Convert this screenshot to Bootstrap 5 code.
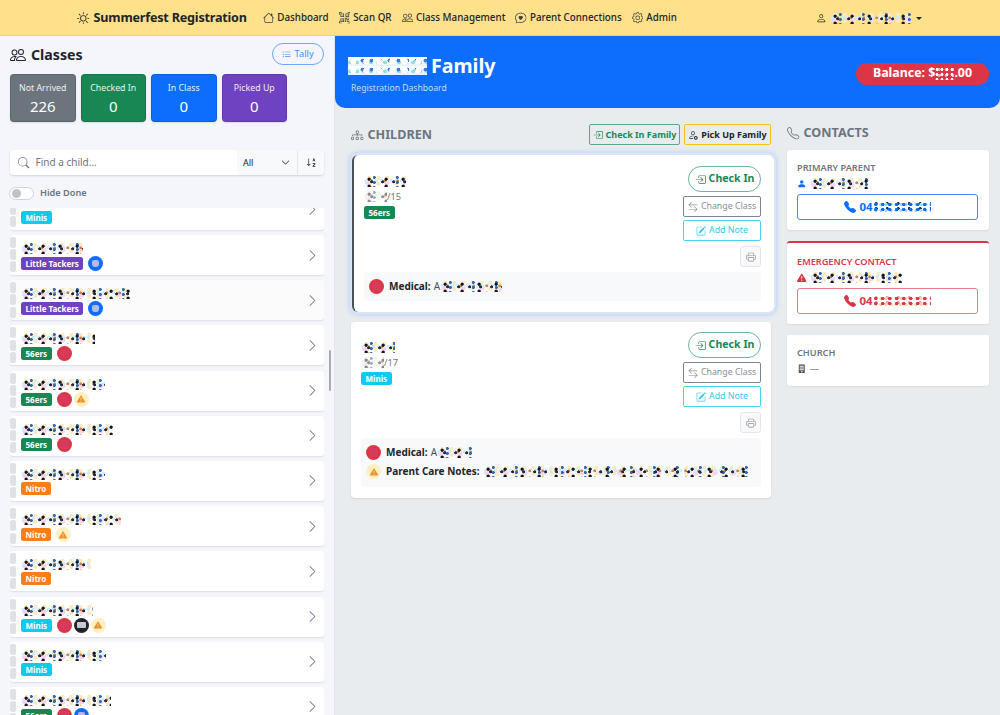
<!DOCTYPE html>
<html lang="en">
<head>
    <meta charset="UTF-8">
    <meta name="viewport" content="width=device-width, initial-scale=1.0">
    <title>Summerfest Registration</title>
    <link rel="stylesheet" href="https://cdn.jsdelivr.net/npm/bootstrap@5.3.0/dist/css/bootstrap.min.css">
    <style>
        body { font-family: "Noto Sans", "Liberation Sans", sans-serif; background: #e9ecef; color: #212529; overflow: hidden; height: 715px; }
        .ico { width: 1em; height: 1em; fill: currentColor; flex: none; vertical-align: -0.125em; }

        .top-bar { height: 36px; background: #ffe08b; border-bottom: 1px solid #f4d06c; padding: 1px 78px 0 77px; }
        .top-brand { font-size: 12.6px; letter-spacing: -.2px; font-weight: 700; color: #212529; margin-right: 16px; gap: 4px; }
        .top-link { font-size: 9.8px; font-weight: 500; color: #212529; margin-right: 10px; gap: 3px; text-decoration: none; }
        .top-link .ico { font-size: 11.5px; color: #3d4248; }
        .top-user { font-size: 10.6px; gap: 3px; }
        .top-user::after { content: ""; border-top: 3px solid #212529; border-left: 3px solid transparent; border-right: 3px solid transparent; margin-left: 1px; }

        .shell { height: 679px; }
        .side-pane { width: 335px; flex: none; background: #f4f6fb; border-right: 1px solid #e4e7ec; padding: 7px 10px 0; position: relative; overflow: hidden; }
        .side-title { font-size: 14.2px; font-weight: 700; gap: 5px; color: #212529; margin-top: 1px; }
        .side-title .ico { font-size: 16px; }
        .tally-btn { width: 52px; height: 22px; padding: 0; font-size: 9.2px; border: 1px solid #6ea8fe; border-radius: 11px; color: #3d8bfd; gap: 3px; background: transparent; }

        .stat-row { gap: 5px; margin-top: 9px; }
        .stat-tile { width: 65.5px; height: 48px; border-radius: 4px; border: 1px solid rgba(0,0,0,.12); color: #fff; text-align: center; padding-top: 6px; box-shadow: 0 1px 2px rgba(0,0,0,.1); }
        .stat-tile .stat-label { font-size: 8.8px; line-height: 14px; opacity: .9; }
        .stat-tile .stat-num { font-size: 15px; line-height: 22px; }
        .tile-purple { background: #6f42c1; }

        .find-bar { margin-top: 28px; height: 25px; background: #fff; border-radius: 4px; box-shadow: 0 1px 2px rgba(0,0,0,.15); overflow: hidden; }
        .find-text { font-size: 10px; color: #6c757d; gap: 6px; padding-left: 8px; width: 227px; }
        .find-text .ico { font-size: 11.5px; color: #6c757d; }
        .find-select { width: 60px; background: #f8f9fa; font-size: 9px; color: #212529; padding: 0 7px 0 6px; }
        .find-sort { flex: 1; background: #f8f9fa; border-left: 1px solid #e4e7ec; color: #212529; font-size: 11px; }
        .hide-row { margin-top: 11px; height: 14px; gap: 6px; margin-left: -1px; }
        .fake-switch { width: 25px; height: 13px; border: 1px solid #ced4da; border-radius: 7px; background: #fff; padding: 1px 2px; }
        .fake-switch::before { content: ""; display: block; width: 9px; height: 9px; border-radius: 50%; background: #bfc3c7; }
        .hide-label { font-size: 9.2px; font-weight: 600; color: #6c757d; }

        .kid-clip { position: absolute; left: 10px; right: 10px; top: 172px; bottom: 0; overflow: hidden; }
        .kid-row { height: 40px; margin-bottom: 5.2px; background: #fff; border-radius: 3px; box-shadow: 0 1px 2px rgba(0,0,0,.1); padding: 2px 5px 0 0; }
        .kid-row:first-child { margin-top: -18.2px; }
        .kid-row.kid-alt { background: #fbfbfc; }
        .kid-grip { width: 6px; gap: 1.2px; margin-right: 5px; flex: none; }
        .kid-grip i { display: block; height: 11px; background: #dee2e6; border-radius: 2px; }
        .kid-body { padding-top: 6px; }
        .kid-chev { color: #6c7a90; font-size: 13px; margin-top: 11.5px; }
        .tag-row { gap: 2px; margin-top: 2px; }

        .class-tag { font-size: 8px; font-weight: 700; color: #fff; height: 13px; line-height: 13px; padding: 0 4.5px; border-radius: 2.5px; display: inline-block; margin-right: 3px; }
        .tag-green { background: #198754; }
        .tag-cyan { background: #0dcaf0; }
        .tag-purple { background: #6f42c1; }
        .tag-orange { background: #fd7e14; }

        .dot-mark { width: 15px; height: 15px; border-radius: 50%; display: inline-flex; align-items: center; justify-content: center; flex: none; }
        .dot-mark::before { content: ""; display: block; }
        .dot-red { background: #dc3545; }
        .dot-red::before { width: 9px; height: 9px; border-radius: 2px; background: #d63a5f; }
        .dot-blue { background: #0d6efd; }
        .dot-blue::before { width: 7px; height: 7px; border-radius: 2px 2px 3px 3px; background: #b9b7e6; }
        .dot-dark { background: #212529; }
        .dot-dark::before { width: 9px; height: 6px; border-radius: 1px; background: #c9c9d2; }
        .dot-warn { background: #fff0c2; color: #e8912a; font-size: 8px; }
        .dot-warn::before { display: none; }

        .fam-head { height: 72px; background: #0d6efd; color: #fff; border-radius: 0 0 10px 10px; padding: 0 11px 0 13px; }
        .fam-block { margin-top: 3px; }
        .fam-name { font-size: 19.6px; font-weight: 700; line-height: 26px; gap: 4px; }
        .fam-sub { font-size: 8.6px; color: #c5dcff; margin-left: 3px; line-height: 14px; margin-top: 2px; }
        .bal-pill { background: #dc3545; font-size: 12.4px; font-weight: 700; height: 22px; width: 133px; border-radius: 11px; margin-top: 3px; }

        .main-pane { flex: 1; min-width: 0; }
        .main-cols { padding: 16px 11px 0 16px; gap: 16px; }
        .kids-col { width: 420px; flex: none; }
        .contacts-col { flex: 1; min-width: 0; }
        .sect-title { font-size: 12.6px; font-weight: 700; color: #6c757d; gap: 4px; }
        .sect-title .ico { font-size: 12.5px; }
        .kids-head .sect-title { margin-top: 2px; }
        .fam-btn { font-size: 9px; font-weight: 700; height: 21px; padding: 0; border-radius: 2px; gap: 3px; background: transparent; white-space: nowrap; }
        .fam-btn .ico { font-size: 10px; }
        .fam-in { border: 1.5px solid #5ba78a; color: #198754; width: 91px; }
        .fam-up { border: 1.5px solid #ffc107; color: #212529; width: 87px; }

        .kid-card { background: #fff; border-radius: 4px; box-shadow: 0 1px 2px rgba(0,0,0,.1); padding: 10px; }
        .kid-card.kid-picked { margin: 10px 0 10px 1px; width: 422px; border-left: 2px solid #495057; padding: 11px 13px 11px 10px; border-radius: 6px; box-shadow: 0 0 0 2px #dbe4f3, 0 0 5px 3px #b9d2f8; }
        .kid-left { padding-top: 10px; }
        .kid-meta { font-size: 9.2px; color: #6c757d; line-height: 13px; margin-top: 3px; margin-bottom: 3px; }
        .act-col { gap: 3px; width: 78px; }
        .act-main { height: 26px; width: 73px; font-size: 10.6px; font-weight: 700; color: #198754; border: 1px solid #6db596; border-radius: 13px; gap: 3px; background: #fff; margin-bottom: 1px; padding: 0; }
        .act-main .ico { font-size: 11px; }
        .act-small { height: 21px; width: 78px; font-size: 8.8px; border-radius: 2px; gap: 3px; background: #fff; padding: 0; }
        .act-small .ico { font-size: 10px; }
        .act-change { border: 1px solid #7d858c; color: #868e96; }
        .act-note { border: 1px solid #44d5f3; color: #31c9ec; }
        .act-print { height: 21px; width: 21px; margin-top: 2px; background: #f8f9fa; border: 1px solid #e3e6ea; border-radius: 3px; color: #868e96; font-size: 10px; padding: 0; }
        .care-box { background: #f8f9fa; border-radius: 4px; padding: 5px 5px; margin-top: 5px; font-size: 10px; }
        .care-box.care-two { padding-bottom: 6px; margin-bottom: 1px; }
        .care-line { gap: 5px; height: 19px; }
        .care-line b { font-weight: 700; color: #212529; margin-right: -2px; }
        .care-line span.care-val { color: #495057; }

        .con-card { background: #fff; border-radius: 3px; box-shadow: 0 1px 2px rgba(0,0,0,.08); padding: 11px 10px 10px; margin-top: 7px; }
        .con-card + .con-card { margin-top: 11px; }
        .con-alert { border-top: 2px solid #dc3545; padding-top: 12px; }
        .con-label { font-size: 9.2px; font-weight: 600; color: #6c757d; line-height: 14px; }
        .con-person { font-size: 9.5px; height: 14px; gap: 3px; margin: 2px 0 3px; color: #495057; }
        .con-phone { height: 26px; width: 181px; font-size: 11.4px; font-weight: 700; border-radius: 3px; padding: 0; background: #fff; }
        .con-phone .ico { font-size: 12px; margin-right: 3px; }
        .phone-blue { border: 1px solid #3d8bfd; color: #0d6efd; }
        .phone-red { border: 1px solid #e77d88; color: #dc3545; }

        /* redacted names: blotchy dots, tiles of different widths so it doesn't look regular */
        .smudge { display: inline-block; height: 11px; flex: none; background-size: 17px 7px, 11px 9px, 23px 5px, 13px 7px, 5px 9px, 19px 11px, 9px 6px; background-image:
            radial-gradient(circle at 30% 45%, #14161c 1.3px, transparent 1.9px),
            radial-gradient(circle at 70% 65%, #242840 1.2px, transparent 1.8px),
            radial-gradient(circle at 45% 30%, #2f66b5 1.2px, transparent 1.7px),
            radial-gradient(circle at 60% 70%, #d9803c 1.2px, transparent 1.7px),
            radial-gradient(circle at 50% 50%, #cdeeff 1.7px, transparent 2.2px),
            radial-gradient(circle at 20% 60%, #f7d2f4 2.4px, transparent 3px),
            radial-gradient(circle at 60% 30%, #ffeabd 1.8px, transparent 2.4px); }
        .smudge-soft { opacity: .5; }
        .smudge-white { height: 18px; background-size: 13px 9px, 9px 9px, 7px 9px, 11px 9px; background-image:
            radial-gradient(circle at 40% 50%, #fff 2.6px, transparent 3.2px),
            radial-gradient(circle at 60% 40%, #3a7cf0 1.6px, transparent 2.2px),
            radial-gradient(circle at 30% 60%, #8fe0e6 1.6px, transparent 2.2px),
            linear-gradient(#fff, #e6f3ff); }
        .smudge-red { height: 13px; background-size: 5px 5px, 7px 6px; background-image:
            radial-gradient(circle at 40% 50%, #fff 1.2px, transparent 1.7px),
            radial-gradient(circle at 60% 40%, #f4a4b0 1.3px, transparent 1.8px); }
        .smudge-blue { height: 10px; background-size: 7px 5px, 5px 6px, 11px 5px; background-image:
            radial-gradient(circle at 40% 50%, #0d6efd 1.5px, transparent 2px),
            radial-gradient(circle at 60% 40%, #a9d5f7 1.4px, transparent 1.9px),
            radial-gradient(circle at 30% 30%, #123a7a 1.2px, transparent 1.7px); }
        .smudge-pink { height: 10px; background-size: 7px 5px, 5px 6px, 11px 5px; background-image:
            radial-gradient(circle at 40% 50%, #dc3545 1.5px, transparent 2px),
            radial-gradient(circle at 60% 40%, #f8d2a8 1.4px, transparent 1.9px),
            radial-gradient(circle at 30% 30%, #f1a5c4 1.3px, transparent 1.8px); }

        .fake-thumb { position: absolute; right: 3px; top: 314px; width: 2px; height: 41px; background: #a9adb3; border-radius: 1px; }
    </style>
</head>
<body>
    <svg width="0" height="0" class="position-absolute">
        <symbol id="i-sun" viewBox="0 0 16 16"><path d="M8 11a3 3 0 1 1 0-6 3 3 0 0 1 0 6m0 1a4 4 0 1 0 0-8 4 4 0 0 0 0 8M8 0a.5.5 0 0 1 .5.5v2a.5.5 0 0 1-1 0v-2A.5.5 0 0 1 8 0m0 13a.5.5 0 0 1 .5.5v2a.5.5 0 0 1-1 0v-2A.5.5 0 0 1 8 13m8-5a.5.5 0 0 1-.5.5h-2a.5.5 0 0 1 0-1h2a.5.5 0 0 1 .5.5M3 8a.5.5 0 0 1-.5.5h-2a.5.5 0 0 1 0-1h2A.5.5 0 0 1 3 8m10.657-5.657a.5.5 0 0 1 0 .707l-1.414 1.415a.5.5 0 1 1-.707-.708l1.414-1.414a.5.5 0 0 1 .707 0m-9.193 9.193a.5.5 0 0 1 0 .707L3.05 13.657a.5.5 0 0 1-.707-.707l1.414-1.414a.5.5 0 0 1 .707 0m9.193 2.121a.5.5 0 0 1-.707 0l-1.414-1.414a.5.5 0 0 1 .707-.707l1.414 1.414a.5.5 0 0 1 0 .707M4.464 4.465a.5.5 0 0 1-.707 0L2.343 3.05a.5.5 0 1 1 .707-.707l1.414 1.414a.5.5 0 0 1 0 .708"/></symbol>
        <symbol id="i-house" viewBox="0 0 16 16"><path d="M8.707 1.5a1 1 0 0 0-1.414 0L.646 8.146a.5.5 0 0 0 .708.708L2 8.207V13.5A1.5 1.5 0 0 0 3.5 15h9a1.5 1.5 0 0 0 1.5-1.5V8.207l.646.647a.5.5 0 0 0 .708-.708L13 5.793V2.5a.5.5 0 0 0-.5-.5h-1a.5.5 0 0 0-.5.5v1.293zM13 7.207V13.5a.5.5 0 0 1-.5.5h-9a.5.5 0 0 1-.5-.5V7.207l5-5z"/></symbol>
        <symbol id="i-qr" viewBox="0 0 16 16"><path d="M0 .5A.5.5 0 0 1 .5 0h3a.5.5 0 0 1 0 1H1v2.5a.5.5 0 0 1-1 0zm12 0a.5.5 0 0 1 .5-.5h3a.5.5 0 0 1 .5.5v3a.5.5 0 0 1-1 0V1h-2.5a.5.5 0 0 1-.5-.5M.5 12a.5.5 0 0 1 .5.5V15h2.5a.5.5 0 0 1 0 1h-3a.5.5 0 0 1-.5-.5v-3a.5.5 0 0 1 .5-.5m15 0a.5.5 0 0 1 .5.5v3a.5.5 0 0 1-.5.5h-3a.5.5 0 0 1 0-1H15v-2.5a.5.5 0 0 1 .5-.5M4 4h1v1H4z"/><path d="M7 2H2v5h5zM3 3h3v3H3zm2 8H4v1h1z"/><path d="M7 9H2v5h5zm-4 1h3v3H3zm8-6h1v1h-1z"/><path d="M9 2h5v5H9zm1 1v3h3V3zM8 8v2h1v1H8v1h2v-2h1v2h1v-1h2v-1h-3V8zm2 2H9V9h1zm4 2h-1v1h-2v1h3zm-4 2v-1H8v1z"/><path d="M12 9h2V8h-2z"/></symbol>
        <symbol id="i-people" viewBox="0 0 16 16"><path d="M15 14s1 0 1-1-1-4-5-4-5 3-5 4 1 1 1 1zm-7.978-1L7 12.996c.001-.264.167-1.03.76-1.72C8.312 10.629 9.282 10 11 10c1.717 0 2.687.63 3.24 1.276.593.69.758 1.457.76 1.72l-.008.002-.014.002zM11 7a2 2 0 1 0 0-4 2 2 0 0 0 0 4m3-2a3 3 0 1 1-6 0 3 3 0 0 1 6 0M6.936 9.28a6 6 0 0 0-1.23-.247A7 7 0 0 0 5 9c-4 0-5 3-5 4q0 1 1 1h4.216A2.24 2.24 0 0 1 5 13c0-1.01.377-2.042 1.09-2.904.243-.294.526-.569.846-.816M4.92 10A5.5 5.5 0 0 0 4 13H1c0-.26.164-1.03.76-1.724.545-.636 1.492-1.256 3.16-1.275ZM1.5 5.5a3 3 0 1 1 6 0 3 3 0 0 1-6 0m3-2a2 2 0 1 0 0 4 2 2 0 0 0 0-4"/></symbol>
        <symbol id="i-chat" viewBox="0 0 16 16"><path d="M2.965 12.695a1 1 0 0 0-.287-.801C1.618 10.83 1 9.468 1 8c0-3.192 3.004-6 7-6s7 2.808 7 6-3.004 6-7 6a8 8 0 0 1-2.088-.272 1 1 0 0 0-.711.074c-.387.196-1.24.57-2.634.893a11 11 0 0 0 .398-2m-.8 3.108.02-.004c1.83-.363 2.948-.842 3.468-1.105A9 9 0 0 0 8 15c4.418 0 8-3.134 8-7s-3.582-7-8-7-8 3.134-8 7c0 1.76.743 3.37 1.97 4.6a10.4 10.4 0 0 1-.524 2.318l-.003.011a11 11 0 0 1-.244.637c-.079.186.074.394.273.362a22 22 0 0 0 .693-.125"/><path d="M8 5.993c1.664-1.711 5.825 1.283 0 5.132-5.825-3.85-1.664-6.843 0-5.132"/></symbol>
        <symbol id="i-gear" viewBox="0 0 16 16"><path d="M8 4.754a3.246 3.246 0 1 0 0 6.492 3.246 3.246 0 0 0 0-6.492M5.754 8a2.246 2.246 0 1 1 4.492 0 2.246 2.246 0 0 1-4.492 0"/><path d="M9.796 1.343c-.527-1.79-3.065-1.79-3.592 0l-.094.319a.873.873 0 0 1-1.255.52l-.292-.16c-1.64-.892-3.433.902-2.54 2.541l.159.292a.873.873 0 0 1-.52 1.255l-.319.094c-1.79.527-1.79 3.065 0 3.592l.319.094a.873.873 0 0 1 .52 1.255l-.16.292c-.892 1.64.901 3.434 2.541 2.54l.292-.159a.873.873 0 0 1 1.255.52l.094.319c.527 1.79 3.065 1.79 3.592 0l.094-.319a.873.873 0 0 1 1.255-.52l.292.16c1.64.893 3.434-.902 2.54-2.541l-.159-.292a.873.873 0 0 1 .52-1.255l.319-.094c1.79-.527 1.79-3.065 0-3.592l-.319-.094a.873.873 0 0 1-.52-1.255l.16-.292c.893-1.64-.902-3.433-2.541-2.54l-.292.159a.873.873 0 0 1-1.255-.52zm-2.633.283c.246-.835 1.428-.835 1.674 0l.094.319a1.873 1.873 0 0 0 2.693 1.115l.291-.16c.764-.415 1.6.42 1.184 1.185l-.159.292a1.873 1.873 0 0 0 1.116 2.692l.318.094c.835.246.835 1.428 0 1.674l-.319.094a1.873 1.873 0 0 0-1.115 2.693l.16.291c.415.764-.42 1.6-1.185 1.184l-.291-.159a1.873 1.873 0 0 0-2.693 1.116l-.094.318c-.246.835-1.428.835-1.674 0l-.094-.319a1.873 1.873 0 0 0-2.692-1.115l-.292.16c-.764.415-1.6-.42-1.184-1.185l.159-.291A1.873 1.873 0 0 0 1.945 8.93l-.319-.094c-.835-.246-.835-1.428 0-1.674l.319-.094A1.873 1.873 0 0 0 3.06 4.377l-.16-.292c-.415-.764.42-1.6 1.185-1.184l.292.159a1.873 1.873 0 0 0 2.692-1.115z"/></symbol>
        <symbol id="i-person" viewBox="0 0 16 16"><path d="M8 8a3 3 0 1 0 0-6 3 3 0 0 0 0 6m2-3a2 2 0 1 1-4 0 2 2 0 0 1 4 0m4 8c0 1-1 1-1 1H3s-1 0-1-1 1-4 6-4 6 3 6 4m-1-.004c-.001-.246-.154-.986-.832-1.664C11.516 10.68 10.289 10 8 10s-3.516.68-4.168 1.332c-.678.678-.83 1.418-.832 1.664z"/></symbol>
        <symbol id="i-person-fill" viewBox="0 0 16 16"><path d="M3 14s-1 0-1-1 1-4 6-4 6 3 6 4-1 1-1 1zm5-6a3 3 0 1 0 0-6 3 3 0 0 0 0 6"/></symbol>
        <symbol id="i-person-gear" viewBox="0 0 16 16"><path d="M11 5a3 3 0 1 1-6 0 3 3 0 0 1 6 0M8 7a2 2 0 1 0 0-4 2 2 0 0 0 0 4m.256 7a4.5 4.5 0 0 1-.229-1.004H3c.001-.246.154-.986.832-1.664C4.484 10.68 5.711 10 8 10q.39 0 .74.025c.226-.341.496-.65.804-.918Q8.844 9.002 8 9c-5 0-6 3-6 4s1 1 1 1z"/><path d="M12.5 9.5a3 3 0 1 0 0 6 3 3 0 0 0 0-6m0 1.6a1.4 1.4 0 1 1 0 2.8 1.4 1.4 0 0 1 0-2.8"/></symbol>
        <symbol id="i-list" viewBox="0 0 16 16"><path d="M5 11.5a.5.5 0 0 1 .5-.5h9a.5.5 0 0 1 0 1h-9a.5.5 0 0 1-.5-.5m0-4a.5.5 0 0 1 .5-.5h9a.5.5 0 0 1 0 1h-9a.5.5 0 0 1-.5-.5m0-4a.5.5 0 0 1 .5-.5h9a.5.5 0 0 1 0 1h-9a.5.5 0 0 1-.5-.5m-3 1a1 1 0 1 0 0-2 1 1 0 0 0 0 2m0 4a1 1 0 1 0 0-2 1 1 0 0 0 0 2m0 4a1 1 0 1 0 0-2 1 1 0 0 0 0 2"/></symbol>
        <symbol id="i-search" viewBox="0 0 16 16"><path d="M11.742 10.344a6.5 6.5 0 1 0-1.397 1.398h-.001q.044.06.098.115l3.85 3.85a1 1 0 0 0 1.415-1.414l-3.85-3.85a1 1 0 0 0-.115-.1zM12 6.5a5.5 5.5 0 1 1-11 0 5.5 5.5 0 0 1 11 0"/></symbol>
        <symbol id="i-chev-r" viewBox="0 0 16 16"><path d="M4.646 1.646a.5.5 0 0 1 .708 0l6 6a.5.5 0 0 1 0 .708l-6 6a.5.5 0 0 1-.708-.708L10.293 8 4.646 2.354a.5.5 0 0 1 0-.708"/></symbol>
        <symbol id="i-chev-d" viewBox="0 0 16 16"><path d="M1.646 4.646a.5.5 0 0 1 .708 0L8 10.293l5.646-5.647a.5.5 0 0 1 .708.708l-6 6a.5.5 0 0 1-.708 0l-6-6a.5.5 0 0 1 0-.708"/></symbol>
        <symbol id="i-sort" viewBox="0 0 16 16"><path d="M4.5 2.5a.5.5 0 0 0-1 0v8.793l-1.146-1.147a.5.5 0 0 0-.708.708l2 2a.5.5 0 0 0 .708 0l2-2a.5.5 0 0 0-.708-.708L4.5 11.293z"/><path d="M11.5 1 9.5 6h1.1l.3-.9h1.2l.3.9h1.1zM9.6 9h4v1l-2.4 3h2.4v1h-4v-1l2.4-3H9.6z"/></symbol>
        <symbol id="i-enter" viewBox="0 0 16 16"><path d="M6 3.5a.5.5 0 0 1 .5-.5h8a.5.5 0 0 1 .5.5v9a.5.5 0 0 1-.5.5h-8a.5.5 0 0 1-.5-.5v-2a.5.5 0 0 0-1 0v2A1.5 1.5 0 0 0 6.5 14h8a1.5 1.5 0 0 0 1.5-1.5v-9A1.5 1.5 0 0 0 14.5 2h-8A1.5 1.5 0 0 0 5 3.5v2a.5.5 0 0 0 1 0z"/><path d="M11.854 8.354a.5.5 0 0 0 0-.708l-3-3a.5.5 0 1 0-.708.708L10.293 7.5H1.5a.5.5 0 0 0 0 1h8.793l-2.147 2.146a.5.5 0 0 0 .708.708z"/></symbol>
        <symbol id="i-tree" viewBox="0 0 16 16"><path d="M6 3.5A1.5 1.5 0 0 1 7.5 2h1A1.5 1.5 0 0 1 10 3.5v1A1.5 1.5 0 0 1 8.5 6v1H14a.5.5 0 0 1 .5.5v1a.5.5 0 0 1-1 0V8h-5v.5a.5.5 0 0 1-1 0V8h-5v.5a.5.5 0 0 1-1 0v-1A.5.5 0 0 1 2 7h5.5V6A1.5 1.5 0 0 1 6 4.5zM8.5 5a.5.5 0 0 0 .5-.5v-1a.5.5 0 0 0-.5-.5h-1a.5.5 0 0 0-.5.5v1a.5.5 0 0 0 .5.5zM0 11.5A1.5 1.5 0 0 1 1.5 10h1A1.5 1.5 0 0 1 4 11.5v1A1.5 1.5 0 0 1 2.5 14h-1A1.5 1.5 0 0 1 0 12.5zm1.5-.5a.5.5 0 0 0-.5.5v1a.5.5 0 0 0 .5.5h1a.5.5 0 0 0 .5-.5v-1a.5.5 0 0 0-.5-.5zm4.5.5A1.5 1.5 0 0 1 7.5 10h1a1.5 1.5 0 0 1 1.5 1.5v1A1.5 1.5 0 0 1 8.5 14h-1A1.5 1.5 0 0 1 6 12.5zm1.5-.5a.5.5 0 0 0-.5.5v1a.5.5 0 0 0 .5.5h1a.5.5 0 0 0 .5-.5v-1a.5.5 0 0 0-.5-.5zm4.5.5a1.5 1.5 0 0 1 1.5-1.5h1a1.5 1.5 0 0 1 1.5 1.5v1a1.5 1.5 0 0 1-1.5 1.5h-1a1.5 1.5 0 0 1-1.5-1.5zm1.5-.5a.5.5 0 0 0-.5.5v1a.5.5 0 0 0 .5.5h1a.5.5 0 0 0 .5-.5v-1a.5.5 0 0 0-.5-.5z"/></symbol>
        <symbol id="i-phone" viewBox="0 0 16 16"><path d="M3.654 1.328a.678.678 0 0 0-1.015-.063L1.605 2.3c-.483.484-.661 1.169-.45 1.77a17.6 17.6 0 0 0 4.168 6.608 17.6 17.6 0 0 0 6.608 4.168c.601.211 1.286.033 1.77-.45l1.034-1.034a.678.678 0 0 0-.063-1.015l-2.307-1.794a.68.68 0 0 0-.58-.122l-2.19.547a1.75 1.75 0 0 1-1.657-.459L5.482 8.062a1.75 1.75 0 0 1-.46-1.657l.548-2.19a.68.68 0 0 0-.122-.58zM1.884.511a1.745 1.745 0 0 1 2.612.163L6.29 2.98c.329.423.445.974.315 1.494l-.547 2.19a.68.68 0 0 0 .178.643l2.457 2.457a.68.68 0 0 0 .644.178l2.189-.547a1.75 1.75 0 0 1 1.494.315l2.306 1.794c.829.645.905 1.87.163 2.611l-1.034 1.034c-.74.74-1.846 1.065-2.877.702a18.6 18.6 0 0 1-7.01-4.42 18.6 18.6 0 0 1-4.42-7.009c-.362-1.03-.037-2.137.703-2.877z"/></symbol>
        <symbol id="i-phone-fill" viewBox="0 0 16 16"><path d="M1.885.511a1.745 1.745 0 0 1 2.61.163L6.29 2.98c.329.423.445.974.315 1.494l-.547 2.19a.68.68 0 0 0 .178.643l2.457 2.457a.68.68 0 0 0 .644.178l2.189-.547a1.75 1.75 0 0 1 1.494.315l2.306 1.794c.829.645.905 1.87.163 2.611l-1.034 1.034c-.74.74-1.846 1.065-2.877.702a18.6 18.6 0 0 1-7.01-4.42 18.6 18.6 0 0 1-4.42-7.009c-.362-1.03-.037-2.137.703-2.877z"/></symbol>
        <symbol id="i-swap" viewBox="0 0 16 16"><path d="M1 11.5a.5.5 0 0 0 .5.5h11.793l-3.147 3.146a.5.5 0 0 0 .708.708l4-4a.5.5 0 0 0 0-.708l-4-4a.5.5 0 0 0-.708.708L13.293 11H1.5a.5.5 0 0 0-.5.5m14-7a.5.5 0 0 1-.5.5H2.707l3.147 3.146a.5.5 0 1 1-.708.708l-4-4a.5.5 0 0 1 0-.708l4-4a.5.5 0 1 1 .708.708L2.707 4H14.5a.5.5 0 0 1 .5.5"/></symbol>
        <symbol id="i-note" viewBox="0 0 16 16"><path d="M15.502 1.94a.5.5 0 0 1 0 .706L14.459 3.69l-2-2L13.502.646a.5.5 0 0 1 .707 0l1.293 1.293zm-1.75 2.456-2-2L4.939 9.21a.5.5 0 0 0-.121.196l-.805 2.414a.25.25 0 0 0 .316.316l2.414-.805a.5.5 0 0 0 .196-.12l6.813-6.814z"/><path d="M1 13.5A1.5 1.5 0 0 0 2.5 15h11a1.5 1.5 0 0 0 1.5-1.5v-6a.5.5 0 0 0-1 0v6a.5.5 0 0 1-.5.5h-11a.5.5 0 0 1-.5-.5v-11a.5.5 0 0 1 .5-.5H9a.5.5 0 0 0 0-1H2.5A1.5 1.5 0 0 0 1 2.5z"/></symbol>
        <symbol id="i-print" viewBox="0 0 16 16"><path d="M2.5 8a.5.5 0 1 0 0-1 .5.5 0 0 0 0 1"/><path d="M5 1a2 2 0 0 0-2 2v2H2a2 2 0 0 0-2 2v3a2 2 0 0 0 2 2h1v1a2 2 0 0 0 2 2h6a2 2 0 0 0 2-2v-1h1a2 2 0 0 0 2-2V7a2 2 0 0 0-2-2h-1V3a2 2 0 0 0-2-2zM4 3a1 1 0 0 1 1-1h6a1 1 0 0 1 1 1v2H4zm1 5a2 2 0 0 0-2 2v1H2a1 1 0 0 1-1-1V7a1 1 0 0 1 1-1h12a1 1 0 0 1 1 1v3a1 1 0 0 1-1 1h-1v-1a2 2 0 0 0-2-2zm7 2v3a1 1 0 0 1-1 1H5a1 1 0 0 1-1-1v-3a1 1 0 0 1 1-1h6a1 1 0 0 1 1 1"/></symbol>
        <symbol id="i-warn" viewBox="0 0 16 16"><path d="M8.982 1.566a1.13 1.13 0 0 0-1.96 0L.165 13.233c-.457.778.091 1.767.98 1.767h13.713c.889 0 1.438-.99.98-1.767zM8 5c.535 0 .954.462.9.995l-.35 3.507a.552.552 0 0 1-1.1 0L7.1 5.995A.905.905 0 0 1 8 5m.002 6a1 1 0 1 1 0 2 1 1 0 0 1 0-2"/></symbol>
        <symbol id="i-church" viewBox="0 0 16 16"><path d="M3 1h10v14H3zm1.5 2v1.5h7V3zm0 3v1.5h7V6zm0 3v1.5h7V9zm2 3v2h3v-2z"/></symbol>
    </svg>

    <nav class="top-bar d-flex align-items-center">
        <a class="top-brand d-flex align-items-center text-decoration-none" href="#"><svg class="ico"><use href="#i-sun"/></svg>Summerfest Registration</a>
        <a class="top-link d-flex align-items-center" href="#"><svg class="ico"><use href="#i-house"/></svg>Dashboard</a>
        <a class="top-link d-flex align-items-center" href="#"><svg class="ico"><use href="#i-qr"/></svg>Scan QR</a>
        <a class="top-link d-flex align-items-center" href="#"><svg class="ico"><use href="#i-people"/></svg>Class Management</a>
        <a class="top-link d-flex align-items-center" href="#"><svg class="ico"><use href="#i-chat"/></svg>Parent Connections</a>
        <a class="top-link d-flex align-items-center" href="#"><svg class="ico"><use href="#i-gear"/></svg>Admin</a>
        <div class="top-user d-flex align-items-center ms-auto"><svg class="ico"><use href="#i-person"/></svg><span class="smudge" style="width:82px"></span></div>
    </nav>

    <div class="shell d-flex">
        <aside class="side-pane">
            <div class="d-flex align-items-center justify-content-between">
                <div class="side-title d-flex align-items-center"><svg class="ico"><use href="#i-people"/></svg>Classes</div>
                <button class="tally-btn btn d-flex align-items-center justify-content-center"><svg class="ico"><use href="#i-list"/></svg>Tally</button>
            </div>
            <div class="stat-row d-flex">
                <div class="stat-tile bg-secondary"><div class="stat-label">Not Arrived</div><div class="stat-num">226</div></div>
                <div class="stat-tile bg-success"><div class="stat-label">Checked In</div><div class="stat-num">0</div></div>
                <div class="stat-tile bg-primary"><div class="stat-label">In Class</div><div class="stat-num">0</div></div>
                <div class="stat-tile tile-purple"><div class="stat-label">Picked Up</div><div class="stat-num">0</div></div>
            </div>
            <div class="find-bar d-flex">
                <div class="find-text d-flex align-items-center"><svg class="ico"><use href="#i-search"/></svg>Find a child...</div>
                <div class="find-select d-flex align-items-center justify-content-between">All<svg class="ico"><use href="#i-chev-d"/></svg></div>
                <div class="find-sort d-flex align-items-center justify-content-center"><svg class="ico"><use href="#i-sort"/></svg></div>
            </div>
            <div class="hide-row d-flex align-items-center"><span class="fake-switch"></span><span class="hide-label">Hide Done</span></div>
            <div class="kid-clip" id="kid-list"></div>
            <div class="fake-thumb"></div>
        </aside>

        <main class="main-pane">
            <header class="fam-head d-flex align-items-center justify-content-between">
                <div class="fam-block">
                    <div class="fam-name d-flex align-items-center"><span class="smudge smudge-white" style="width:79px"></span>Family</div>
                    <div class="fam-sub">Registration Dashboard</div>
                </div>
                <div class="bal-pill d-flex align-items-center justify-content-center">Balance: $<span class="smudge smudge-red" style="width:19px"></span>.00</div>
            </header>

            <div class="main-cols d-flex">
                <section class="kids-col">
                    <div class="kids-head d-flex align-items-center justify-content-between">
                        <div class="sect-title d-flex align-items-center"><svg class="ico"><use href="#i-tree"/></svg>CHILDREN</div>
                        <div class="d-flex gap-1">
                            <button class="fam-btn fam-in btn d-flex align-items-center justify-content-center"><svg class="ico"><use href="#i-enter"/></svg>Check In Family</button>
                            <button class="fam-btn fam-up btn d-flex align-items-center justify-content-center"><svg class="ico"><use href="#i-person-gear"/></svg>Pick Up Family</button>
                        </div>
                    </div>

                    <div class="kid-card kid-picked">
                        <div class="d-flex justify-content-between">
                            <div class="kid-left d-flex flex-column align-items-start">
                                <span class="smudge" style="width:42px"></span>
                                <div class="kid-meta d-flex align-items-center"><span class="smudge smudge-soft" style="width:23px"></span>/15</div>
                                <span class="class-tag tag-green">56ers</span>
                            </div>
                            <div class="act-col d-flex flex-column align-items-end">
                                <button class="act-main btn d-flex align-items-center justify-content-center"><svg class="ico"><use href="#i-enter"/></svg>Check In</button>
                                <button class="act-small act-change btn d-flex align-items-center justify-content-center"><svg class="ico"><use href="#i-swap"/></svg>Change Class</button>
                                <button class="act-small act-note btn d-flex align-items-center justify-content-center"><svg class="ico"><use href="#i-note"/></svg>Add Note</button>
                                <button class="act-print btn d-flex align-items-center justify-content-center"><svg class="ico"><use href="#i-print"/></svg></button>
                            </div>
                        </div>
                        <div class="care-box">
                            <div class="care-line d-flex align-items-center"><span class="dot-mark dot-red"></span><b>Medical:</b><span class="care-val d-flex align-items-center">A<span class="smudge" style="width:62px"></span></span></div>
                        </div>
                    </div>

                    <div class="kid-card">
                        <div class="d-flex justify-content-between">
                            <div class="kid-left d-flex flex-column align-items-start">
                                <span class="smudge" style="width:34px"></span>
                                <div class="kid-meta d-flex align-items-center"><span class="smudge smudge-soft" style="width:23px"></span>/17</div>
                                <span class="class-tag tag-cyan">Minis</span>
                            </div>
                            <div class="act-col d-flex flex-column align-items-end">
                                <button class="act-main btn d-flex align-items-center justify-content-center"><svg class="ico"><use href="#i-enter"/></svg>Check In</button>
                                <button class="act-small act-change btn d-flex align-items-center justify-content-center"><svg class="ico"><use href="#i-swap"/></svg>Change Class</button>
                                <button class="act-small act-note btn d-flex align-items-center justify-content-center"><svg class="ico"><use href="#i-note"/></svg>Add Note</button>
                                <button class="act-print btn d-flex align-items-center justify-content-center"><svg class="ico"><use href="#i-print"/></svg></button>
                            </div>
                        </div>
                        <div class="care-box care-two">
                            <div class="care-line d-flex align-items-center"><span class="dot-mark dot-red"></span><b>Medical:</b><span class="care-val d-flex align-items-center">A<span class="smudge" style="width:36px"></span></span></div>
                            <div class="care-line d-flex align-items-center"><span class="dot-mark dot-warn"><svg class="ico"><use href="#i-warn"/></svg></span><b>Parent Care Notes:</b><span class="smudge" style="width:266px"></span></div>
                        </div>
                    </div>
                </section>

                <section class="contacts-col">
                    <div class="sect-title d-flex align-items-center"><svg class="ico"><use href="#i-phone"/></svg>CONTACTS</div>
                    <div class="con-card">
                        <div class="con-label">PRIMARY PARENT</div>
                        <div class="con-person d-flex align-items-center"><svg class="ico text-primary"><use href="#i-person-fill"/></svg><span class="smudge" style="width:58px"></span></div>
                        <button class="con-phone phone-blue btn d-flex align-items-center justify-content-center"><svg class="ico"><use href="#i-phone-fill"/></svg>04<span class="smudge smudge-blue" style="width:58px"></span></button>
                    </div>
                    <div class="con-card con-alert">
                        <div class="con-label text-danger">EMERGENCY CONTACT</div>
                        <div class="con-person d-flex align-items-center"><svg class="ico text-danger"><use href="#i-warn"/></svg><span class="smudge" style="width:92px"></span></div>
                        <button class="con-phone phone-red btn d-flex align-items-center justify-content-center"><svg class="ico"><use href="#i-phone-fill"/></svg>04<span class="smudge smudge-pink" style="width:58px"></span></button>
                    </div>
                    <div class="con-card">
                        <div class="con-label">CHURCH</div>
                        <div class="con-person d-flex align-items-center mb-0"><svg class="ico"><use href="#i-church"/></svg>—</div>
                    </div>
                </section>
            </div>
        </main>
    </div>

    <script src="https://cdn.jsdelivr.net/npm/bootstrap@5.3.0/dist/js/bootstrap.bundle.min.js"></script>
    <script>
        const tagClass = { "Minis": "tag-cyan", "Little Tackers": "tag-purple", "56ers": "tag-green", "Nitro": "tag-orange" };
        const kids = [
            [0, "Minis", []],
            [62, "Little Tackers", ["blue"]],
            [110, "Little Tackers", ["blue"]],
            [74, "56ers", ["red"]],
            [84, "56ers", ["red", "warn"]],
            [92, "56ers", ["red"]],
            [84, "Nitro", []],
            [100, "Nitro", ["warn"]],
            [70, "Nitro", []],
            [72, "Minis", ["red", "dark", "warn"]],
            [85, "Minis", []],
            [90, "56ers", ["red", "blue"]]
        ];

        document.getElementById("kid-list").innerHTML = kids.map(([width, tag, marks], index) => `
            <div class="kid-row d-flex ${index === 2 ? "kid-alt" : ""}">
                <div class="kid-grip d-flex flex-column"><i></i><i></i><i></i></div>
                <div class="kid-body flex-grow-1">
                    <span class="smudge d-block" style="width:${width}px"></span>
                    <div class="tag-row d-flex align-items-center">
                        <span class="class-tag ${tagClass[tag]}">${tag}</span>
                        ${marks.map(m => `<span class="dot-mark dot-${m}">${m === "warn" ? '<svg class="ico"><use href="#i-warn"/></svg>' : ""}</span>`).join("")}
                    </div>
                </div>
                <svg class="ico kid-chev"><use href="#i-chev-r"/></svg>
            </div>`).join("");
    </script>
</body>
</html>
